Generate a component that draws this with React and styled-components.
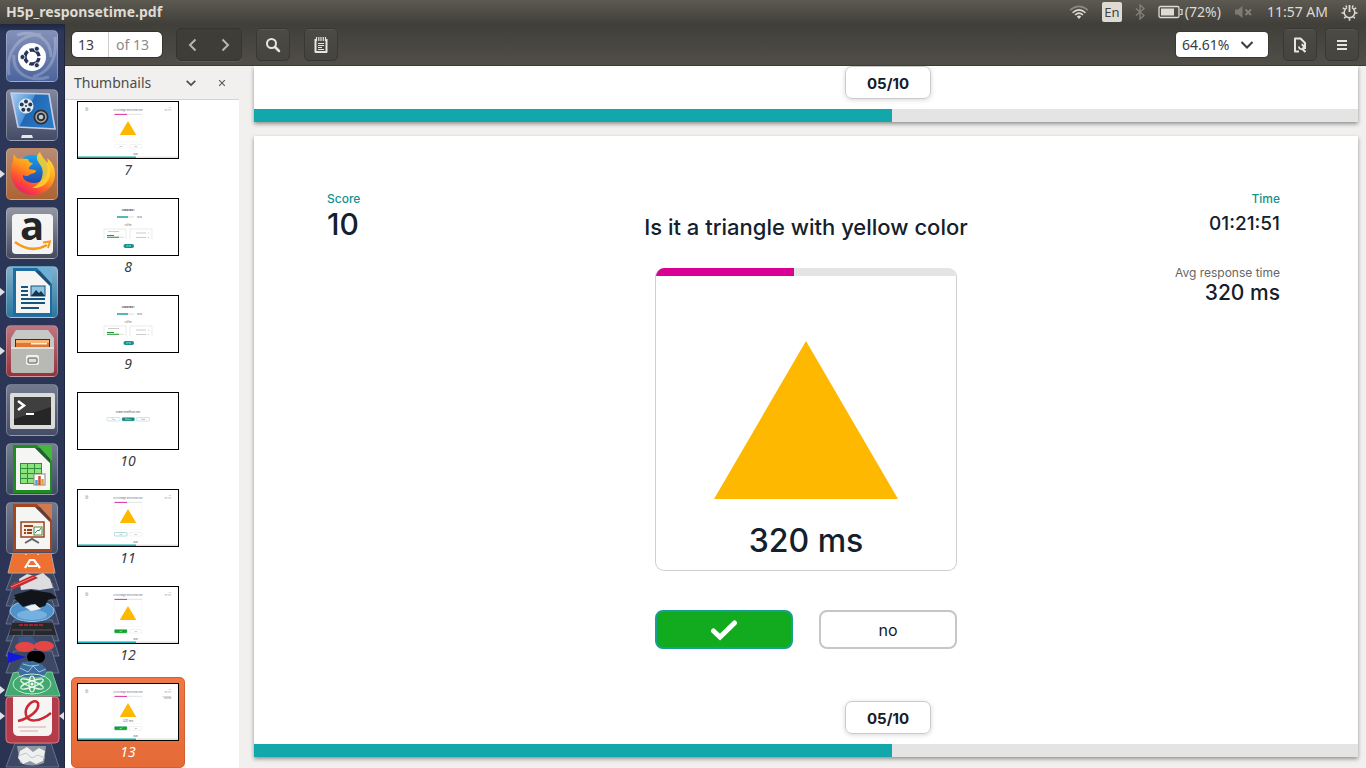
import React from "react";
import styled, { createGlobalStyle, css } from "styled-components";

const uiFont = '"Noto Sans", "Open Sans", sans-serif';
const slideFont = 'Inter, "Open Sans", sans-serif';

const GlobalStyle = createGlobalStyle`
  *, *::before, *::after { box-sizing: border-box; }
  body { margin: 0; font-family: ${uiFont}; background: #f1f0ee; }
  button, input, select { font: inherit; color: inherit; margin: 0; }
  h1, h2, p, dl, dd, dt, ul, ol { margin: 0; padding: 0; font-weight: inherit; }
  ul, ol { list-style: none; }
  svg { display: block; flex: none; }
`;

const Desktop = styled.div`
  height: 100vh;
  display: flex;
  flex-direction: column;
  overflow: hidden;
`;

/* ---------- system panel ---------- */

const Panel = styled.header`
  flex: none;
  height: 24px;
  display: flex;
  align-items: center;
  justify-content: space-between;
  padding: 0 8px 0 6px;
  color: #dfdbd2;
  background: linear-gradient(#5c5a50, #403f3a);
`;

const WindowTitle = styled.h1`
  font-size: 14px;
  line-height: 24px;
  font-weight: 700;
`;

const Indicators = styled.div`
  display: flex;
  align-items: center;
  gap: 13px;
  font-size: 14px;
  line-height: 24px;
`;

const Keyboard = styled.span`
  width: 20px;
  height: 20px;
  border-radius: 2px;
  background: #dfdbd2;
  color: #45443e;
  font-size: 13px;
  line-height: 20px;
  text-align: center;
`;

const Battery = styled.span`
  display: flex;
  align-items: center;
  gap: 2px;
`;

/* ---------- launcher ---------- */

const Workspace = styled.div`
  flex: 1;
  min-height: 0;
  display: flex;
`;

const Launcher = styled.nav`
  flex: none;
  width: 65px;
  overflow: hidden;
  padding-top: 6px;
  background: linear-gradient(#202641, #2c3759 8px, #2b3556 60%, #2b3352);
  border-right: 1px solid #20263f;
`;

const Dock = styled.ul`
  display: flex;
  flex-direction: column;
  align-items: center;
  gap: 7px;
`;

const DockItem = styled.li`
  position: relative;
  width: 100%;
  display: flex;
  padding-left: 6px;
  ${(p) =>
    p.$running &&
    css`
      &::before {
        content: "";
        position: absolute;
        left: 0;
        top: 22px;
        border: 4px solid transparent;
        border-left: 5px solid #dfe0e6;
        border-right: 0;
      }
    `}
`;

const Tile = styled.button`
  width: 52px;
  height: 52px;
  padding: 0;
  border: 1px solid rgba(255, 255, 255, 0.25);
  border-radius: 5px;
  background: ${(p) => p.$bg};
`;

const TileArt = styled.svg`
  overflow: visible;
`;

const FoldedItem = styled.li`
  width: 100%;
  margin-top: -11px;
`;

/* ---------- document viewer ---------- */

const Viewer = styled.div`
  flex: 1;
  min-width: 0;
  display: flex;
  flex-direction: column;
`;

const Toolbar = styled.div`
  flex: none;
  height: 42px;
  display: flex;
  align-items: center;
  justify-content: space-between;
  padding: 0 7px;
  background: linear-gradient(#403f3a, #504e47);
  border-bottom: 1px solid #3b3a36;
`;

const ToolGroup = styled.div`
  display: flex;
  align-items: center;
  gap: ${(p) => p.$gap}px;
`;

const PageEntry = styled.label`
  display: flex;
  width: 90px;
  height: 25px;
  border-radius: 5px;
  overflow: hidden;
  background: #fff;
  box-shadow: 0 0 0 1px #35342f;
  font-size: 14px;
  line-height: 25px;
  color: #8b8b8b;
`;

const PageInput = styled.input`
  width: 37px;
  padding: 0 0 0 6px;
  border: 0;
  border-right: 1px solid #cfcdca;
  background: transparent;
  color: #3c3c3c;
`;

const PageTotal = styled.span`
  padding-left: 7px;
`;

const NavPair = styled.div`
  display: flex;
  border: 1px solid #35342f;
  border-radius: 5px;
  box-shadow: 0 1px 0 #5d5b54;
  background: #3e3d38;
`;

const NavButton = styled.button`
  width: 32px;
  height: 31px;
  display: grid;
  place-items: center;
  padding: 0;
  border: 0;
  background: none;
`;

const ToolButton = styled.button`
  width: 34px;
  height: 33px;
  display: grid;
  place-items: center;
  padding: 0;
  border: 1px solid #393833;
  border-radius: 5px;
  background: linear-gradient(#4b4a44, #45443f);
  box-shadow: inset 0 1px 0 #57554e;
`;

const ZoomField = styled.label`
  display: flex;
  align-items: center;
  width: 92px;
  height: 25px;
  padding-right: 14px;
  margin-right: 7px;
  border-radius: 4px;
  background: #fff;
  color: #3c3c3c;
  box-shadow: 0 0 0 1px #3a3934;
`;

const ZoomSelect = styled.select`
  flex: 1;
  min-width: 0;
  appearance: none;
  border: 0;
  padding: 0 0 0 6px;
  background: transparent;
  font-size: 14px;
  line-height: 24px;
`;

const Split = styled.div`
  flex: 1;
  min-height: 0;
  display: flex;
`;

const Sidebar = styled.aside`
  flex: none;
  width: 174px;
  display: flex;
  flex-direction: column;
  background: #fff;
`;

const SidebarHead = styled.div`
  flex: none;
  height: 34px;
  display: flex;
  align-items: center;
  padding: 0 7px 0 9px;
  background: #f1f0ee;
  border-bottom: 1px solid #d6d4d2;
  color: #4c4c4c;
`;

const SidebarTitle = styled.h2`
  flex: 1;
  font-size: 14px;
  line-height: 24px;
`;

const HeadButton = styled.button`
  width: 20px;
  height: 24px;
  margin-left: 11px;
  display: grid;
  place-items: center;
  padding: 0;
  border: 0;
  background: none;
`;

const ThumbList = styled.ol`
  flex: 1;
  min-height: 0;
  overflow: hidden;
  display: flex;
  flex-direction: column;
  justify-content: flex-end;
  gap: 6px;
  padding-left: 6px;
`;

const Thumb = styled.button`
  width: 114px;
  height: 91px;
  display: flex;
  flex-direction: column;
  align-items: center;
  padding: 5px;
  border: 1px solid ${(p) => (p.$selected ? "#d2602f" : "transparent")};
  border-radius: 5px;
  background: ${(p) => (p.$selected ? "linear-gradient(#f07746, #e46a36)" : "none")};
  color: ${(p) => (p.$selected ? "#fff" : "#3c3c3c")};
  font-size: 14px;
  line-height: 21px;
  font-style: italic;
`;

const ThumbFrame = styled.span`
  border: 1px solid #000;
  background: #fff;
`;

const Canvas = styled.main`
  flex: 1;
  min-width: 0;
  overflow: hidden;
  display: flex;
  flex-direction: column;
  gap: 14px;
  padding: 0 8px 0 15px;
  background: #f1f0ee;
`;

const Slide = styled.section`
  flex: none;
  display: flex;
  flex-direction: column;
  background: #fff;
  box-shadow: 0 2px 4px rgba(0, 0, 0, 0.4);
  font-family: ${slideFont};
  color: #14202b;
`;

const SlideBody = styled.div`
  display: grid;
  grid-template-columns: 1fr 302px 1fr;
  padding: 52px 73px;
`;

const Stats = styled.dl`
  text-align: ${(p) => p.$align};
  padding: 0 5px 0 0;
  font-weight: 500;
`;

const StatLabel = styled.dt`
  font-size: 12px;
  line-height: 22px;
  font-weight: ${(p) => (p.$muted ? 400 : 500)};
  color: ${(p) => (p.$muted ? "#666" : "#17918d")};
`;

const statSizes = { small: 19, medium: 21, large: 30 };

const StatValue = styled.dd`
  font-size: ${(p) => statSizes[p.$size]}px;
  line-height: ${(p) => (p.$compact ? 18 : 28)}px;
  margin-bottom: 24px;
`;

const Stage = styled.div`
  display: flex;
  flex-direction: column;
  align-items: center;
  padding-top: 24px;
`;

const Question = styled.h2`
  font-size: 22px;
  line-height: 30px;
  font-weight: 500;
  white-space: nowrap;
  margin-bottom: 26px;
`;

const Card = styled.div`
  width: 100%;
  height: 303px;
  display: flex;
  flex-direction: column;
  align-items: center;
  border: 1px solid #cfcfcf;
  border-top: 0;
  border-radius: 9px;
  overflow: hidden;
`;

const Meter = styled.div`
  width: 100%;
  height: ${(p) => p.$height}px;
  background: #e4e4e4;

  &::before {
    content: "";
    display: block;
    height: 100%;
    width: ${(p) => p.$value}%;
    background: ${(p) => p.$color};
  }
`;

const Shape = styled.svg`
  margin: 65px 0 22px;
`;

const Elapsed = styled.p`
  font-size: 32px;
  line-height: 40px;
  font-weight: 500;
`;

const Answers = styled.div`
  width: 100%;
  display: flex;
  justify-content: space-between;
  margin-top: 39px;
`;

const Answer = styled.button`
  width: 138px;
  height: 39px;
  display: grid;
  place-items: center;
  padding: 0;
  border: 2px solid ${(p) => (p.$correct ? "#169f92" : "#c6c6c6")};
  border-radius: 8px;
  background: ${(p) => (p.$correct ? "#12ab1f" : "#fff")};
  font-size: 16px;
  line-height: 20px;
`;

const CounterRow = styled.div`
  width: 302px;
  align-self: center;
  display: flex;
  justify-content: flex-end;
  padding: 0 26px 10px 0;
`;

const Counter = styled.span`
  width: 86px;
  height: 33px;
  border: 1px solid #cbcbcb;
  border-radius: 7px;
  box-shadow: 0 1px 5px rgba(0, 0, 0, 0.16);
  text-align: center;
  font-size: 15px;
  line-height: 33px;
  font-weight: 700;
`;

/* ---------- small icons ---------- */

const Wifi = () => (
  <svg width="20" height="16" viewBox="0 0 20 16" fill="none" stroke="#dfdbd2" strokeWidth="1.5">
    <path d="M1 6.2Q10-1.500 19 6.200" stroke="#8b887f" />
    <path d="M3.500 8.800Q10 3 16.500 8.800" />
    <path d="M6 11Q10 7.300 14 11" />
    <path d="M7.800 12.500Q10 10.500 12.200 12.500L10 15z" fill="#dfdbd2" stroke="none" />
  </svg>
);

const Bluetooth = () => (
  <svg width="10" height="16" viewBox="0 0 10 16" fill="none" stroke="#85827a" strokeWidth="1.3">
    <path d="M1 4.500L9 11.500 5 15V1l4 3.500-8 7" />
  </svg>
);

const BatteryIcon = () => (
  <svg width="25" height="14" viewBox="0 0 25 14">
    <rect x="1" y="1.500" width="20" height="11" rx="1.500" fill="none" stroke="#dfdbd2" strokeWidth="1.300" />
    <rect x="3" y="3.500" width="13" height="7" fill="#dfdbd2" />
    <path d="M22 4.500h2v5h-2" fill="none" stroke="#dfdbd2" strokeWidth="1.200" />
  </svg>
);

const Muted = () => (
  <svg width="20" height="14" viewBox="0 0 20 14">
    <path d="M1 4.500h3L8.500 1v12L4 9.500H1z" fill="#7d7a72" />
    <path d="M11.500 4.500l5.500 5.500M17 4.500L11.500 10" stroke="#85827a" strokeWidth="1.800" />
  </svg>
);

const Session = () => (
  <svg width="17" height="17" viewBox="0 0 17 17" fill="none" stroke="#dfdbd2">
    <path d="M6 3.700A5.300 5.300 0 1 0 11 3.700" strokeWidth="1.500" />
    <path d="M8.500 1v7" strokeWidth="1.800" />
    <path
      d="M3.700 5L1.800 3.900M3 9H.500M4.600 12.800l-1.500 1.500M8.500 14.200v2.500M12.400 12.800l1.500 1.500M14 9h2.500M13.300 5l1.900-1.100M5.800 3.500L4.800 1.500M11.200 3.500l1-2"
      strokeWidth="1.600"
    />
  </svg>
);

const Chevron = ({ d, color = "#b9b6ad", w = 14, h = 14 }) => (
  <svg width={w} height={h} viewBox="0 0 14 14" fill="none" stroke={color} strokeWidth="2">
    <path d={d} />
  </svg>
);

const SearchIcon = () => (
  <svg width="16" height="16" viewBox="0 0 16 16" fill="none" stroke="#e8e5de">
    <circle cx="6.500" cy="6.500" r="4.500" strokeWidth="2" />
    <path d="M10 10l4 4" strokeWidth="2.500" strokeLinecap="round" />
  </svg>
);

const NotesIcon = () => (
  <svg width="16" height="18" viewBox="0 0 16 18" fill="none" stroke="#e8e5de">
    <path d="M2.500 3v13h11V3" strokeWidth="2" strokeLinejoin="round" />
    <path d="M3.500 1v4M5.800 1v4M8 1v4M10.300 1v4M12.500 1v4" strokeWidth="1.200" />
    <path d="M5 7.500h6M5 9.500h6M5 11.500h4M5 13.500h6" strokeWidth="1.200" />
  </svg>
);

const DocSearchIcon = () => (
  <svg width="14" height="16" viewBox="0 0 14 16" fill="none" stroke="#e8e5de">
    <path d="M6 14.500H2V1.500h5.500L12 6v6" strokeWidth="2" strokeLinejoin="round" />
    <path d="M6 9.500a2.300 2.300 0 1 0 2.500-2" strokeWidth="1.800" />
    <path d="M9 11.500l3.500 3.500" strokeWidth="2.200" />
  </svg>
);

const MenuIcon = () => (
  <svg width="12" height="12" viewBox="0 0 12 12" stroke="#e8e5de" strokeWidth="2">
    <path d="M1 2h10M1 6h10M1 10h10" />
  </svg>
);

const CheckIcon = () => (
  <svg width="28" height="22" viewBox="0 0 28 22" fill="none" stroke="#fff" strokeWidth="5">
    <path d="M3.500 12l6.500 6L24.500 4" strokeLinecap="round" strokeLinejoin="miter" />
  </svg>
);

/* ---------- launcher drawings ---------- */

const Art = ({ children }) => (
  <TileArt width="50" height="50" viewBox="0 0 50 50">
    {children}
  </TileArt>
);

const DashArt = () => (
  <Art>
    <g fill="none" stroke="#fff" opacity="0.220" strokeWidth="3">
      <path d="M2 44C-2 22 12 2 34 4" />
      <path d="M48 6c2 18-2 34-22 40" />
      <path d="M10 4C28-2 44 8 44 26" />
      <path d="M42 46C22 52 5 42 7 24" />
    </g>
    <circle cx="25" cy="26" r="14" fill="#fff" />
    <circle cx="25" cy="26" r="7" fill="none" stroke="#26355c" strokeWidth="3.400" strokeDasharray="12.600 2.060" strokeDashoffset="-1" />
    <g fill="#26355c" stroke="#fff" strokeWidth="0.800">
      <circle cx="15.500" cy="26" r="2.500" />
      <circle cx="29.800" cy="17.800" r="2.500" />
      <circle cx="29.800" cy="34.200" r="2.500" />
    </g>
  </Art>
);

const MediaArt = () => (
  <Art>
    <defs>
      <linearGradient id="screen" x2="1" y2="0.400">
        <stop offset="0" stopColor="#a9d2f1" />
        <stop offset="0.480" stopColor="#4c93d6" />
        <stop offset="0.500" stopColor="#2168b4" />
        <stop offset="1" stopColor="#2a79c7" />
      </linearGradient>
    </defs>
    <path d="M4 3l38 1 6 35-37-2z" fill="url(#screen)" stroke="#c8cbe6" strokeWidth="1.600" />
    <circle cx="19" cy="16" r="7.500" fill="#e4edf5" />
    <g fill="#273a50">
      <circle cx="19" cy="11.500" r="2" />
      <circle cx="23.300" cy="14.500" r="2" />
      <circle cx="21.700" cy="19.700" r="2" />
      <circle cx="16.300" cy="19.700" r="2" />
      <circle cx="14.700" cy="14.500" r="2" />
      <circle cx="19" cy="16" r="1" />
    </g>
    <circle cx="34" cy="27" r="7.500" fill="#2d3035" />
    <circle cx="34" cy="27" r="5" fill="none" stroke="#a9aeb5" strokeWidth="1.500" />
    <circle cx="34" cy="27" r="2.300" fill="#c6c9ce" />
    <path d="M15 45h10l1 3H14z" fill="#e6e6e6" />
  </Art>
);

const FirefoxArt = () => (
  <Art>
    <defs>
      <linearGradient id="fox" x1="0.800" y1="0" x2="0.200" y2="1">
        <stop offset="0" stopColor="#ffe840" />
        <stop offset="0.450" stopColor="#ff9a1a" />
        <stop offset="0.750" stopColor="#ff4838" />
        <stop offset="1" stopColor="#e2147c" />
      </linearGradient>
      <linearGradient id="globe" x2="0" y2="1">
        <stop offset="0" stopColor="#18a1ee" />
        <stop offset="1" stopColor="#2543a4" />
      </linearGradient>
    </defs>
    <circle cx="25" cy="21" r="15" fill="url(#globe)" />
    <path
      d="M33 3c1 5 8 9 8 17 0 9-7 14-14 14-7 0-12-4-11-8 3 2 5 1 8-1 2-1 5-1 5-3-1-2-5-1-7-2 0-3 3-4 4-6-3 0-4-1-5-4-3 0-7-1-9 0-3-1-4-3-5-5-1 3-1 5-1 7-2 5-3 9-2 15 2 11 11 19 22 19 12 0 22-9 22-21 0-8-4-13-8-16 1 2 1 4 0 5C38 10 35 8 33 3z"
      fill="url(#fox)"
    />
    <path d="M33 3c-5 4-3 8-1 11 4 5 5 10 2 17-2 4-5 6-9 8 13 1 20-9 18-20-2-6-8-9-10-16z" fill="#ffd42e" opacity="0.850" />
  </Art>
);

const AmazonArt = () => (
  <Art>
    <rect x="5" y="6" width="41" height="40" rx="4" fill="#f4f4f5" />
    <text x="25" y="32" textAnchor="middle" fontSize="40" fontWeight="700" fontFamily="Open Sans, sans-serif" fill="#252525">
      a
    </text>
    <path d="M8 34q16 12 32 3" fill="none" stroke="#f79b18" strokeWidth="2.500" />
    <path d="M36 34.500l7-1-2 6.500" fill="none" stroke="#f79b18" strokeWidth="2" />
  </Art>
);

const OfficeSheet = ({ color, fold, children }) => (
  <Art>
    <path d="M6 1h39v48H6z" fill={color} />
    <path d="M30 1h15v16z" fill={fold} />
    <path d="M9 4h19l15 15v27H9z" fill="#f5f5f4" />
    <path d="M28 4l15 15V15L33 4z" fill="#20394c" opacity="0.550" />
    {children}
  </Art>
);

const WriterArt = () => (
  <OfficeSheet color="#1f6ca3" fold="#6faed4">
    <path d="M14 20h7M14 24h7M14 28h7M14 32h24M14 36h24M14 41h18" stroke="#16557f" strokeWidth="2" />
    <rect x="24" y="19" width="14" height="10" fill="#8fc4e4" stroke="#16557f" />
    <path d="M24 29l5-6 3 3 2-2 4 5z" fill="#17384c" />
  </OfficeSheet>
);

const FilesArt = () => (
  <Art>
    <path d="M9 4h32l6 8v9H4v-9z" fill="#c7c8c5" />
    <path d="M8 13h35v9H8z" fill="#5a2115" />
    <path d="M9 14h33v3H9z" fill="#f6b477" />
    <path d="M9 17h33v4H9z" fill="#e37533" />
    <path d="M24 17h16v1.500H24z" fill="#fff1dd" />
    <path d="M4 21h43v24q0 2-2 2H6q-2 0-2-2z" fill="#b8b8b5" />
    <path d="M4 21h43v2H4z" fill="#dededc" />
    <rect x="19" y="29" width="13" height="10" rx="2" fill="#f0f0ef" />
    <rect x="21" y="32" width="9" height="5" rx="1" fill="#deded9" stroke="#555" />
  </Art>
);

const TerminalArt = () => (
  <Art>
    <rect x="3" y="8" width="45" height="36" rx="2" fill="#dcdcda" />
    <rect x="7" y="12" width="37" height="28" fill="#262626" />
    <path d="M7 12h37v10L7 34z" fill="#4a4a4a" opacity="0.700" />
    <path d="M11 16l6 4.500-6 4.500" fill="none" stroke="#fff" strokeWidth="2.500" />
    <path d="M19 29h8" stroke="#fff" strokeWidth="2" />
  </Art>
);

const CalcArt = () => (
  <OfficeSheet color="#1e8c1e" fold="#45b83b">
    <rect x="13" y="19" width="22" height="21" fill="#2d8e3c" />
    <g fill="#8ee27c">
      {[20, 25, 30, 35].map((y) =>
        [14, 21, 28].map((x) => <rect key={`${x}-${y}`} x={x} y={y} width="6" height="4" />)
      )}
    </g>
    <rect x="27" y="30" width="11" height="11" fill="#fff" stroke="#888" />
    <path d="M29.500 41v-5" stroke="#4b9fce" strokeWidth="2.500" />
    <path d="M32.500 41v-9" stroke="#cc5527" strokeWidth="2.500" />
    <path d="M35.500 41v-6" stroke="#e7a32d" strokeWidth="2.500" />
  </OfficeSheet>
);

const ImpressArt = () => (
  <OfficeSheet color="#a5471e" fold="#d07b4f">
    <rect x="14" y="19" width="23" height="15" fill="#fbeee4" stroke="#97441f" strokeWidth="1.500" />
    <path d="M17 23h9M17 27h2M20 27h5M17 30h2M20 30h5" stroke="#97441f" strokeWidth="2" />
    <rect x="27" y="24" width="8" height="8" fill="#fff" stroke="#418a4a" />
    <path d="M28 30l3-3 1 1 2-3" fill="none" stroke="#418a4a" />
    <path d="M25 35v2M18 40l7-4 7 4" fill="none" stroke="#666" strokeWidth="2" />
  </OfficeSheet>
);

const FoldedStack = () => (
  <svg width="64" height="218" viewBox="0 0 64 218">
    <g fill="#3d4864" stroke="#7d87a0" strokeWidth="0.700">
      <path d="M14 19h38l7 21H6z" />
      <path d="M14 33h38l7 23H6z" />
      <path d="M14 50h38l7 24H6z" />
      <path d="M14 70h38l7 21H6z" />
      <path d="M14 85h38l7 21H6z" />
      <path d="M14 101h38l7 22H6z" />
      <path d="M15 193h36l8 24H6z" />
    </g>
    <path d="M13 3h38l4 20H8z" fill="#ef7132" stroke="#b8a397" />
    <path d="M25 4q7-5 14 0M25 18l5-8h4l6 8M28 16h9" fill="none" stroke="#fff" strokeWidth="2.200" />
    <path d="M19 29l8-5 8 2 8-3 7 6 3 9-13 2-9-1-10 1z" fill="#dddddf" />
    <path d="M9 36l24-11 5 3-24 11z" fill="#c42b31" />
    <path d="M11 37l23-10" stroke="#f08078" />
    <path d="M14 45l17-5 20 3 6 5-10 2H17z" fill="#111419" />
    <ellipse cx="32" cy="61" rx="22" ry="10.500" fill="#4f92cc" stroke="#9ccbee" />
    <ellipse cx="32" cy="65" rx="15" ry="5" fill="#91c5ea" opacity="0.600" />
    <path d="M14 48h35l-4 8-7 2-6-4-9 3z" fill="#11151b" />
    <path d="M25 57l10-3 6 5-10 2z" fill="#eef0f1" />
    <path d="M12 73h41l3 12H9z" fill="#26282c" />
    <path d="M19 75h24" stroke="#a3232c" strokeWidth="2" strokeDasharray="4 1" />
    <path d="M12 80h40M22 80v5M34 80v5" stroke="#53565c" />
    <path d="M18 87l14-1 5 8-18 6z" fill="#3e5685" />
    <ellipse cx="25" cy="97" rx="10" ry="5" fill="#e44646" />
    <ellipse cx="44" cy="96" rx="10" ry="5" fill="#e44646" />
    <path d="M8 102l18 5-18 6z" fill="#1418d8" />
    <rect x="27" y="101" width="18" height="12" rx="6" fill="#020203" />
    <path d="M17 122l5-10 11-1 10 4 5 8-8 6-15-1z" fill="#3b6d9e" />
    <path d="M20 118l8 4 5-6 6 6 7-3M23 114l7 2 9-1" fill="none" stroke="#a0c1df" />
    <path d="M13 123l5-1q1 7 14 6 13 1 15-6h5l8 24H5z" fill="#42aa70" stroke="#81caa0" />
    <ellipse cx="32" cy="134" rx="19" ry="10" fill="none" stroke="#c5e8d0" />
    <g fill="none" stroke="#e6f6e8" strokeWidth="1.200">
      <ellipse cx="32" cy="134" rx="12" ry="3" transform="rotate(20 32 134)" />
      <ellipse cx="32" cy="134" rx="12" ry="3" transform="rotate(-20 32 134)" />
      <ellipse cx="32" cy="134" rx="3" ry="8" />
    </g>
    <circle cx="32" cy="134" r="1.500" fill="#fff" />
    <path d="M9 147h47q3 0 3 4v38q0 4-4 4H10q-4 0-4-4v-38q0-4 3-4z" fill="#b43b49" stroke="#d57c83" />
    <path d="M13 147h39v33q0 6-6 6H19q-6 0-6-6z" fill="#f6f5f3" />
    <path d="M18 171c12-3 22-11 20-18-4-6-14 4-12 12 2 8 14 7 25-2" fill="none" stroke="#c92a35" strokeWidth="2.500" />
    <path d="M18 177h28M20 181h18" stroke="#d9aaa4" />
    <path d="M17 196h29l-2 17q-12 5-24 0z" fill="#8f98a2" />
    <path d="M20 201l7-4 6 5 6-4 6 3-2 10-7 3-6-3-7 3-5-6z" fill="#eef0ef" />
    <path d="M18 206l8-3 6 5 6-3 7 3" stroke="#bfc6cc" fill="none" />
    <path d="M0 136l5 4-5 4zM0 162l5 4-5 4zM64 162l-5 4 5 4z" fill="#dfe0e6" />
  </svg>
);

/* ---------- thumbnails ---------- */

const Mini = ({ children }) => (
  <svg width="100" height="56" viewBox="0 0 100 56" fontFamily="Inter, sans-serif">
    {children}
  </svg>
);

const QuizMini = ({ answer, timed }) => (
  <Mini>
    <g fill="#5a636b" fontSize="2">
      <text x="50" y="9" textAnchor="middle" fontSize="2">Is it a triangle with yellow color</text>
      <text x="7" y="6" fontSize="1">Score</text>
      <text x="7" y="9" fontSize="3">10</text>
      <text x="93" y="6" textAnchor="end" fontSize="1">Time</text>
      <text x="93" y="9" textAnchor="end" fontSize="1.700">01:21:51</text>
      {timed && <text x="93" y="13" textAnchor="end" fontSize="1">Avg response time</text>}
      {timed && <text x="93" y="15" textAnchor="end">320 ms</text>}
      {timed && <text x="50" y="38" textAnchor="middle" fontSize="3">320 ms</text>}
      <text x="57.500" y="53" textAnchor="middle" fontWeight="700" fontSize="1.500">05/10</text>
    </g>
    <path d="M36.500 12h27.500v27.500H36.500z" fill="none" stroke="#f0f0f0" strokeWidth="0.400" />
    <path d="M49 12.400h15" stroke="#dedede" strokeWidth="0.800" />
    <path d="M36.500 12.400H49" stroke="#d61897" strokeWidth="0.900" />
    <path d="M50 19l8.300 14H41.700z" fill="#ffb800" />
    <rect
      x="36.500"
      y="42.500"
      width="12.500"
      height="3.500"
      rx="0.700"
      fill={answer === "correct" ? "#12a51e" : "#fff"}
      stroke={answer ? "#64bdb5" : "#eee"}
      strokeWidth="0.500"
    />
    <rect x="51.500" y="42.500" width="12.500" height="3.500" rx="0.700" fill="#fff" stroke="#ddd" strokeWidth="0.400" />
    {answer === "correct" ? (
      <path d="M41.800 44.200l.8.800 1.400-1.500" fill="none" stroke="#fff" strokeWidth="0.600" />
    ) : (
      <text x="42.700" y="45" textAnchor="middle" fontSize="1.500" fill="#555">yes</text>
    )}
    <text x="57.700" y="45" textAnchor="middle" fontSize="1.500" fill="#555">no</text>
    <rect y="54.500" width="100" height="1.500" fill="#e3e3e3" />
    <rect y="54.500" width="58" height="1.500" fill="#12b4b8" />
  </Mini>
);

const ResultMini = () => (
  <Mini>
    <text x="50" y="11.500" textAnchor="middle" fontSize="2.500" fontWeight="700" fill="#333">FINISHED!</text>
    <path d="M39 18h17" stroke="#ddd" />
    <path d="M39 18h11" stroke="#16a09b" strokeWidth="1.400" />
    <text x="59" y="18.800" fontSize="2" fill="#444">10/10</text>
    <text x="50" y="25" textAnchor="middle" fontSize="1" fill="#777">Score</text>
    <text x="50" y="27" textAnchor="middle" fontSize="2" fill="#666">320 ms</text>
    <path d="M26 40V30h22v10M52 40V30h22v10" fill="none" stroke="#ddd" strokeWidth="0.600" />
    <path d="M30 32.500h11M58 34h10M58 38.500h10M70 34h1M70 38.500h1" stroke="#aaa" strokeWidth="0.600" />
    <path d="M29 36.500h7" stroke="#27933a" />
    <path d="M29 38.300h12" stroke="#3ba546" strokeWidth="1.200" />
    <path d="M41 38.300h5" stroke="#ddd" />
    <rect x="45.500" y="45" width="10.500" height="4" rx="2" fill="#168f8d" />
    <text x="50.700" y="47.600" textAnchor="middle" fontSize="1.500" fill="#cfe">RETRY</text>
  </Mini>
);

const ChoiceMini = () => (
  <Mini>
    <text x="50" y="20" textAnchor="middle" fontSize="2" fill="#333">Choose the difficulty level</text>
    <g strokeWidth="0.400" stroke="#74c7c5" fill="#fff">
      <rect x="29" y="24.500" width="13" height="3.500" rx="1" />
      <rect x="44" y="24.500" width="12.500" height="3.500" rx="1" fill="#168783" />
      <rect x="58.500" y="24.500" width="13" height="3.500" rx="1" />
    </g>
    <text x="35.500" y="26.900" textAnchor="middle" fontSize="1.500" fill="#555">Easy</text>
    <text x="50.200" y="26.900" textAnchor="middle" fontSize="1.500" fill="#fff">Medium</text>
    <text x="65" y="26.900" textAnchor="middle" fontSize="1.500" fill="#555">Hard</text>
  </Mini>
);

const dock = [
  { name: "Search your computer", bg: "linear-gradient(#8490b8, #4c659f)", art: <DashArt /> },
  { name: "Displays and media", bg: "linear-gradient(#81889d, #444b66)", art: <MediaArt /> },
  { name: "Firefox", bg: "linear-gradient(#b68d78, #ad6331)", art: <FirefoxArt />, running: true },
  { name: "Amazon", bg: "linear-gradient(#9497a4, #454a60)", art: <AmazonArt /> },
  { name: "LibreOffice Writer", bg: "linear-gradient(#81b1c9, #2b769f)", art: <WriterArt />, running: true },
  { name: "Files", bg: "linear-gradient(#bd7780, #96323c)", art: <FilesArt />, running: true },
  { name: "Terminal", bg: "linear-gradient(#747a8e, #454d67)", art: <TerminalArt /> },
  { name: "LibreOffice Calc", bg: "linear-gradient(#747f8e, #3e4b65)", art: <CalcArt /> },
  { name: "LibreOffice Impress", bg: "linear-gradient(#747a8e, #454d67)", art: <ImpressArt /> },
];

const thumbs = [
  { page: 7, art: <QuizMini /> },
  { page: 8, art: <ResultMini /> },
  { page: 9, art: <ResultMini /> },
  { page: 10, art: <ChoiceMini /> },
  { page: 11, art: <QuizMini answer="selected" /> },
  { page: 12, art: <QuizMini answer="correct" /> },
  { page: 13, art: <QuizMini answer="correct" timed /> },
];

const PreviousSlide = styled(Slide)`
  height: 56px;
  justify-content: flex-end;
`;

const SlideFooter = () => (
  <>
    <CounterRow>
      <Counter>05/10</Counter>
    </CounterRow>
    <Meter $height={13} $value={57.8} $color="#12a8ab" />
  </>
);

export default function App() {
  return (
    <Desktop>
      <GlobalStyle />
      <Panel>
        <WindowTitle>H5p_responsetime.pdf</WindowTitle>
        <Indicators>
          <Wifi />
          <Keyboard>En</Keyboard>
          <Bluetooth />
          <Battery>
            <BatteryIcon />
            (72%)
          </Battery>
          <Muted />
          <time>11:57 AM</time>
          <Session />
        </Indicators>
      </Panel>
      <Workspace>
        <Launcher aria-label="Launcher">
          <Dock>
            {dock.map((item) => (
              <DockItem key={item.name} $running={item.running}>
                <Tile $bg={item.bg} aria-label={item.name}>
                  {item.art}
                </Tile>
              </DockItem>
            ))}
            <FoldedItem>
              <FoldedStack />
            </FoldedItem>
          </Dock>
        </Launcher>
        <Viewer>
          <Toolbar>
            <ToolGroup $gap={14}>
              <PageEntry>
                <PageInput defaultValue="13" aria-label="Page" />
                <PageTotal>of 13</PageTotal>
              </PageEntry>
              <NavPair>
                <NavButton aria-label="Previous page">
                  <Chevron d="M9.500 1.500L4 7l5.500 5.500" />
                </NavButton>
                <NavButton aria-label="Next page">
                  <Chevron d="M4.500 1.500L10 7l-5.500 5.500" />
                </NavButton>
              </NavPair>
              <ToolButton aria-label="Find">
                <SearchIcon />
              </ToolButton>
              <ToolButton aria-label="Annotate">
                <NotesIcon />
              </ToolButton>
            </ToolGroup>
            <ToolGroup $gap={8}>
              <ZoomField>
                <ZoomSelect aria-label="Zoom" defaultValue="64.61%">
                  <option>64.61%</option>
                </ZoomSelect>
                <Chevron d="M1.500 4L7 9.500 12.500 4" color="#3c3c3c" />
              </ZoomField>
              <ToolButton aria-label="File options">
                <DocSearchIcon />
              </ToolButton>
              <ToolButton aria-label="Menu">
                <MenuIcon />
              </ToolButton>
            </ToolGroup>
          </Toolbar>
          <Split>
            <Sidebar>
              <SidebarHead>
                <SidebarTitle>Thumbnails</SidebarTitle>
                <HeadButton aria-label="Choose sidebar view">
                  <Chevron d="M2 4.500L7 9.500l5-5" color="#4c4c4c" w={12} h={12} />
                </HeadButton>
                <HeadButton aria-label="Close sidebar">
                  <Chevron d="M2 2l10 10M12 2L2 12" color="#5c5c5c" w={8} h={8} />
                </HeadButton>
              </SidebarHead>
              <ThumbList>
                {thumbs.map(({ page, art }) => (
                  <li key={page}>
                    <Thumb $selected={page === 13}>
                      <ThumbFrame>{art}</ThumbFrame>
                      {page}
                    </Thumb>
                  </li>
                ))}
              </ThumbList>
            </Sidebar>
            <Canvas>
              <PreviousSlide>
                <SlideFooter />
              </PreviousSlide>
              <Slide>
                <SlideBody>
                  <Stats $align="left">
                    <StatLabel>Score</StatLabel>
                    <StatValue $size="large">10</StatValue>
                  </Stats>
                  <Stage>
                    <Question>Is it a triangle with yellow color</Question>
                    <Card>
                      <Meter $height={8} $value={46} $color="#d90093" />
                      <Shape width="184" height="158" viewBox="0 0 184 158">
                        <path d="M92 0l92 158H0z" fill="#ffb800" />
                      </Shape>
                      <Elapsed>320 ms</Elapsed>
                    </Card>
                    <Answers>
                      <Answer $correct aria-label="yes">
                        <CheckIcon />
                      </Answer>
                      <Answer>no</Answer>
                    </Answers>
                  </Stage>
                  <Stats $align="right">
                    <StatLabel>Time</StatLabel>
                    <StatValue $size="small">01:21:51</StatValue>
                    <StatLabel $muted>Avg response time</StatLabel>
                    <StatValue $size="medium" $compact>320 ms</StatValue>
                  </Stats>
                </SlideBody>
                <SlideFooter />
              </Slide>
            </Canvas>
          </Split>
        </Viewer>
      </Workspace>
    </Desktop>
  );
}
